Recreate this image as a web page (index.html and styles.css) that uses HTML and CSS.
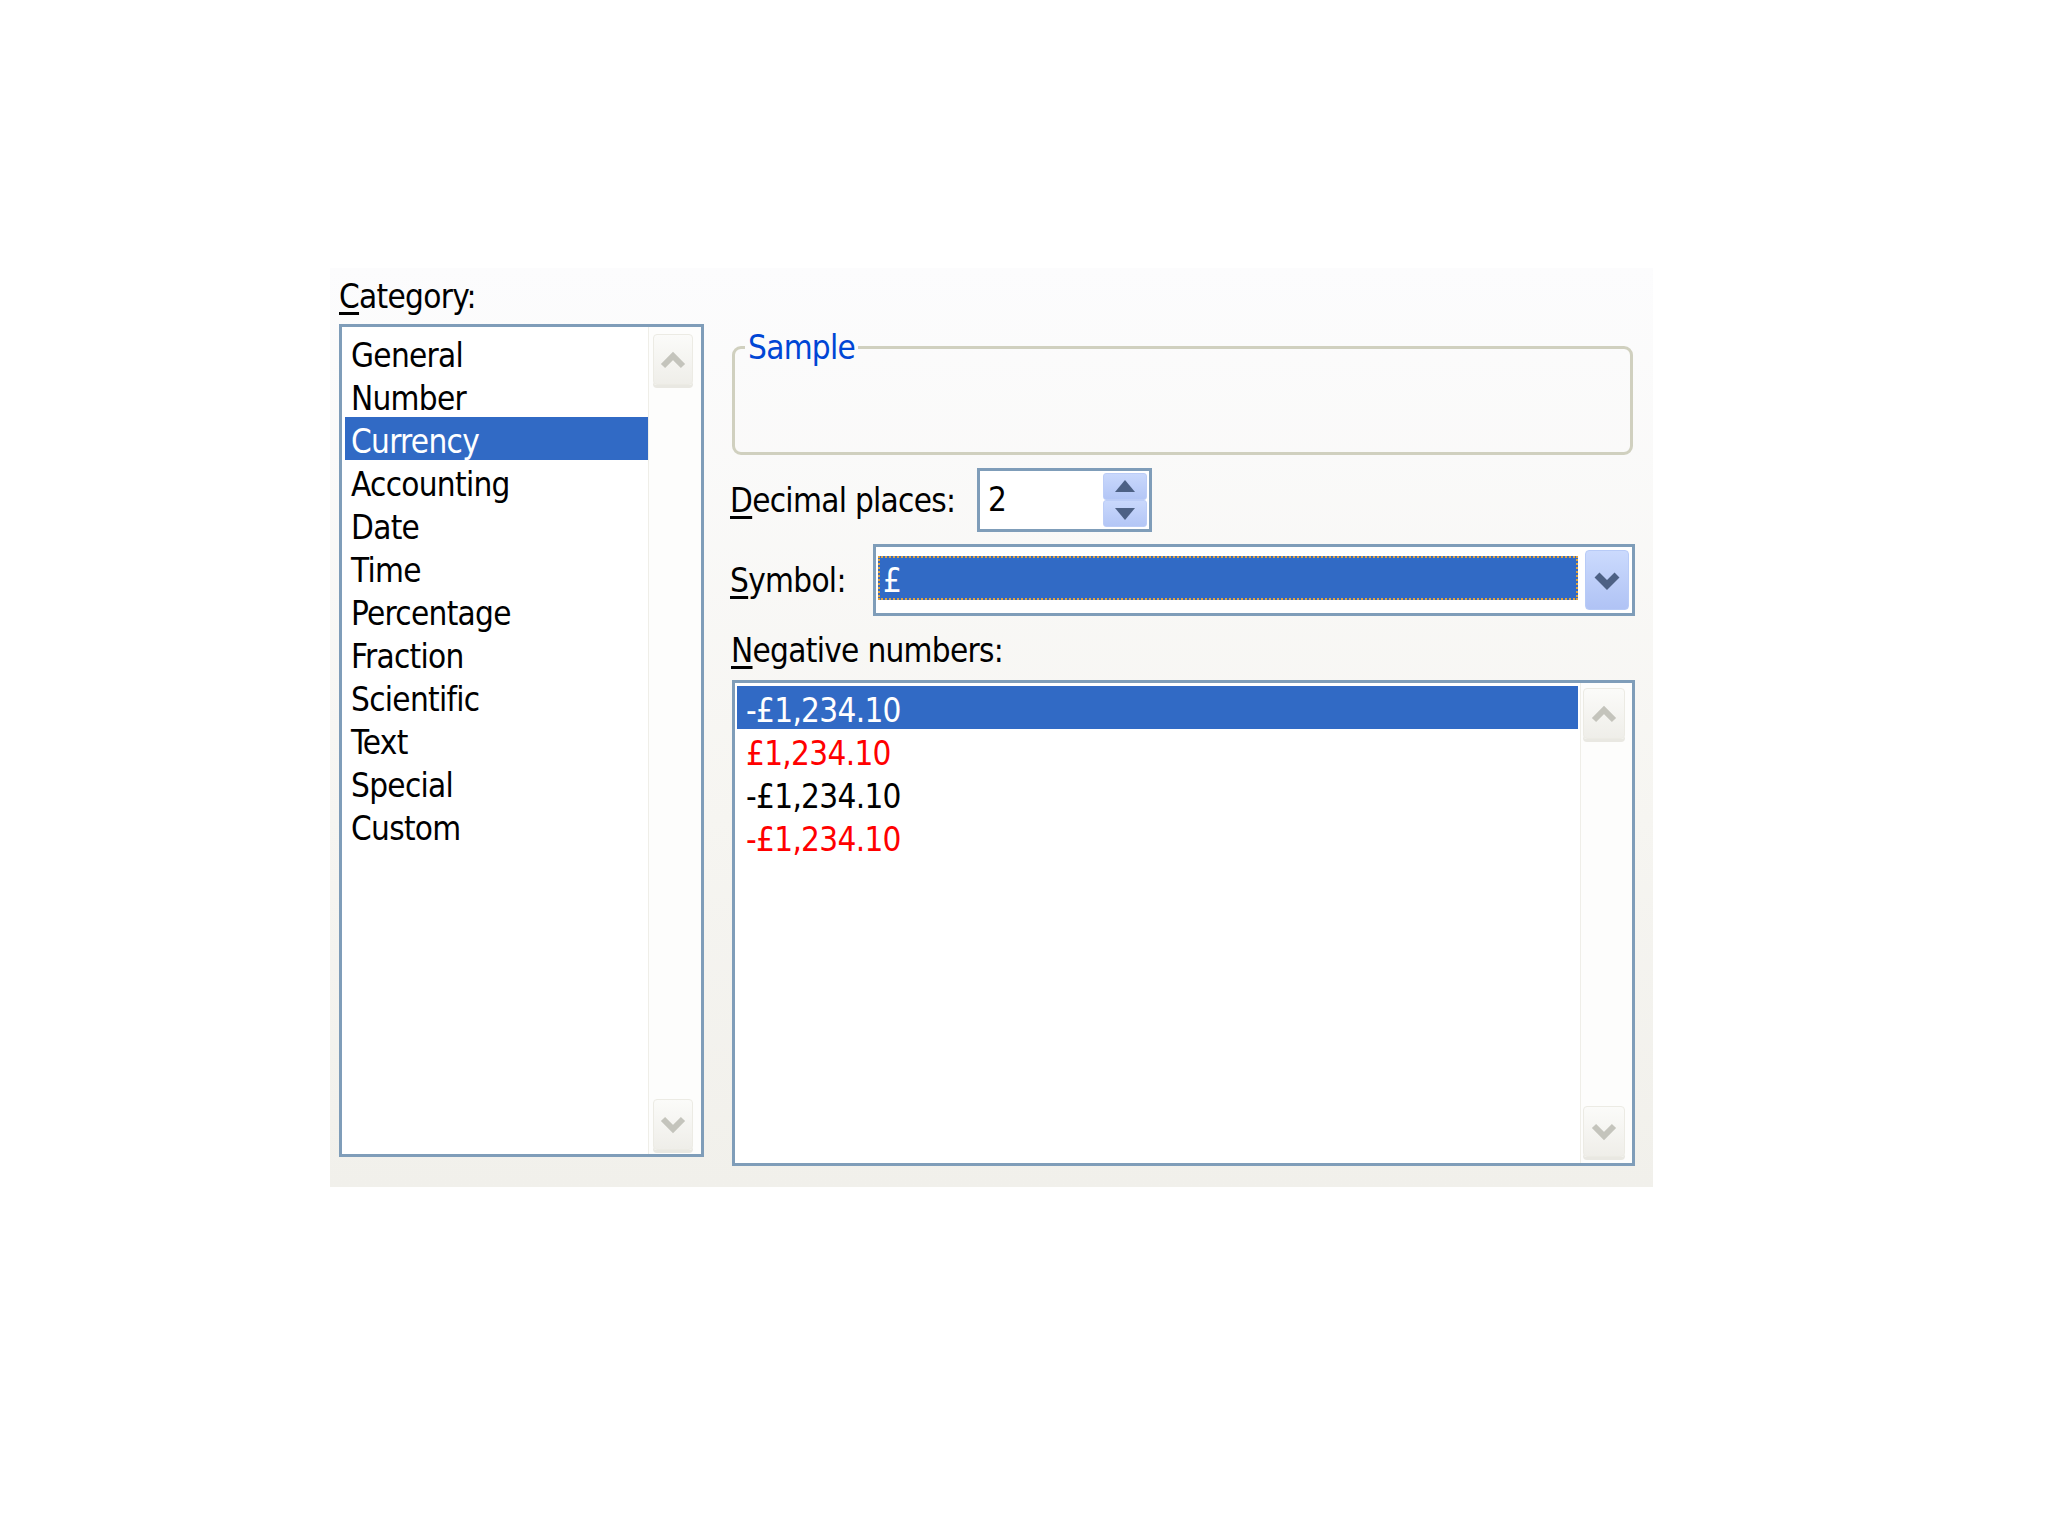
FILE: index.html
```html
<!DOCTYPE html>
<html lang="en">
<head>
<meta charset="utf-8">
<title>Format Cells - Number</title>
<link rel="stylesheet" href="styles.css">
</head>
<body>
<div class="panel">
  <div class="left">
    <div class="label cat-label"><u>C</u>ategory:</div>
    <div class="listbox cat">
      <ul class="items">
        <li>General</li>
        <li>Number</li>
        <li class="sel">Currency</li>
        <li>Accounting</li>
        <li>Date</li>
        <li>Time</li>
        <li>Percentage</li>
        <li>Fraction</li>
        <li>Scientific</li>
        <li>Text</li>
        <li>Special</li>
        <li>Custom</li>
      </ul>
      <div class="vscroll">
        <div class="sbtn sbtn-top"><svg width="28" height="18" viewBox="0 0 28 18"><polyline points="4,15 14,5 24,15" fill="none" stroke="#c4c4bc" stroke-width="6"/></svg></div>
        <div class="sbtn sbtn-bot"><svg width="28" height="18" viewBox="0 0 28 18"><polyline points="4,3 14,13 24,3" fill="none" stroke="#c4c4bc" stroke-width="6"/></svg></div>
      </div>
    </div>
  </div>
  <div class="right">
    <fieldset class="sample"><legend>Sample</legend></fieldset>
    <div class="row dec-row">
      <div class="label dec-label"><u>D</u>ecimal places:</div>
      <div class="spin">
        <span class="spin-val">2</span>
        <div class="spin-btns">
          <div class="spin-btn"><svg width="20" height="13" viewBox="0 0 20 13"><polygon points="10,0 20,12 0,12" fill="#4d6185"/></svg></div>
          <div class="spin-btn"><svg width="20" height="13" viewBox="0 0 20 13"><polygon points="0,1 20,1 10,13" fill="#4d6185"/></svg></div>
        </div>
      </div>
    </div>
    <div class="row sym-row">
      <div class="label sym-label"><u>S</u>ymbol:</div>
      <div class="combo">
        <div class="combo-sel">£</div>
        <div class="combo-btn"><svg width="28" height="20" viewBox="0 0 28 20"><polyline points="4,5 14,15 24,5" fill="none" stroke="#4d6185" stroke-width="7"/></svg></div>
      </div>
    </div>
    <div class="label neg-label"><u>N</u>egative numbers:</div>
    <div class="listbox neg">
      <ul class="items">
        <li class="sel">-£1,234.10</li>
        <li class="red">£1,234.10</li>
        <li>-£1,234.10</li>
        <li class="red">-£1,234.10</li>
      </ul>
      <div class="vscroll">
        <div class="sbtn sbtn-top"><svg width="28" height="18" viewBox="0 0 28 18"><polyline points="4,15 14,5 24,15" fill="none" stroke="#c4c4bc" stroke-width="6"/></svg></div>
        <div class="sbtn sbtn-bot"><svg width="28" height="18" viewBox="0 0 28 18"><polyline points="4,3 14,13 24,3" fill="none" stroke="#c4c4bc" stroke-width="6"/></svg></div>
      </div>
    </div>
  </div>
</div>
</body>
</html>
```
FILE: styles.css
```css
html, body {
  margin: 0;
  padding: 0;
  background: #ffffff;
}
body {
  font-family: "DejaVu Sans Condensed", "DejaVu Sans", "Liberation Sans", sans-serif;
  font-stretch: condensed;
  font-size: 33px;
  line-height: 33px;
  letter-spacing: -0.7px;
  color: #000000;
}
u {
  text-decoration: underline;
  text-decoration-thickness: 3px;
  text-underline-offset: 4px;
}
.panel {
  margin: 268px 0 0 330px;
  width: 1323px;
  height: 919px;
  background: linear-gradient(#fcfcfd, #f6f5f1 60%, #f1f0eb);
  display: flex;
}
.left {
  width: 365px;
  margin-left: 9px;
  padding-top: 12px;
  display: flex;
  flex-direction: column;
}
.label {
  height: 33px;
  white-space: nowrap;
}
.cat-label {
  margin-bottom: 11px;
}
.listbox {
  box-sizing: border-box;
  border: 3px solid #7f9db9;
  background: #ffffff;
  display: flex;
}
.cat {
  width: 365px;
  height: 833px;
}
.items {
  list-style: none;
  margin: 0;
  flex: 1;
}
.items li {
  box-sizing: border-box;
  height: 43px;
  padding-top: 8px;
  line-height: 33px;
  white-space: nowrap;
}
.items li.sel {
  background: #316ac5;
  color: #ffffff;
}
.items li.red {
  color: #ff0000;
}
.cat .items {
  padding: 4px 0 0 3px;
}
.cat .items li {
  padding-left: 6px;
}
.vscroll {
  box-sizing: border-box;
  border-left: 1px solid #efeee8;
  background: #fdfdfc;
  display: flex;
  flex-direction: column;
  justify-content: space-between;
}
.cat .vscroll {
  width: 53px;
  padding: 7px 0 4px 4px;
}
.sbtn {
  box-sizing: border-box;
  border: 1px solid #ecebe4;
  border-radius: 4px;
  background: linear-gradient(#fbfbf9, #efeee9);
  box-shadow: 0 3px 0 #e9e8e2;
  display: flex;
  align-items: center;
  justify-content: center;
}
.cat .sbtn {
  width: 40px;
  height: 51px;
}
.right {
  margin-left: 26px;
  width: 905px;
  padding-top: 63px;
  display: flex;
  flex-direction: column;
}
.sample {
  box-sizing: border-box;
  margin: 0 0 0 2px;
  width: 901px;
  height: 124px;
  min-width: 0;
  border: 3px solid #d0d0bf;
  border-radius: 9px;
  padding: 0 0 0 10px;
}
.sample legend {
  padding: 0 3px;
  color: #0046d5;
  line-height: 33px;
}
.row {
  display: flex;
  align-items: center;
}
.dec-row {
  margin-top: 13px;
}
.dec-label {
  width: 247px;
}
.spin {
  box-sizing: border-box;
  width: 175px;
  height: 64px;
  border: 3px solid #7f9db9;
  background: #ffffff;
  display: flex;
}
.spin-val {
  flex: 1;
  padding: 12px 0 0 8px;
  line-height: 33px;
}
.spin-btns {
  width: 44px;
  height: 54px;
  margin: 2px;
  display: flex;
  flex-direction: column;
}
.spin-btn {
  box-sizing: border-box;
  height: 27px;
  background: linear-gradient(#c9d8fc, #b3c6f6);
  border: 1px solid #bccdf7;
  border-radius: 3px;
  display: flex;
  align-items: center;
  justify-content: center;
}
.sym-row {
  margin-top: 12px;
}
.sym-label {
  width: 143px;
}
.combo {
  box-sizing: border-box;
  width: 762px;
  height: 72px;
  border: 3px solid #7f9db9;
  background: #ffffff;
  display: flex;
}
.combo-sel {
  box-sizing: border-box;
  flex: 1;
  height: 44px;
  margin: 9px 0 0 2px;
  padding: 6px 0 0 3px;
  background: #316ac5;
  border: 2px dotted #e0a33f;
  color: #ffffff;
  line-height: 33px;
}
.combo-btn {
  box-sizing: border-box;
  width: 44px;
  height: 60px;
  margin: 3px 3px 3px 7px;
  background: linear-gradient(#cbdafd, #b0c3f5);
  border: 1px solid #b8cbf7;
  border-radius: 4px;
  display: flex;
  align-items: center;
  justify-content: center;
}
.neg-label {
  margin-top: 18px;
  margin-bottom: 13px;
  padding-left: 1px;
}
.neg {
  margin-left: 2px;
  width: 903px;
  height: 486px;
}
.neg .items {
  padding: 3px 2px 0 2px;
}
.neg .items li {
  padding-left: 9px;
}
.neg .vscroll {
  width: 52px;
  padding: 5px 0 6px 2px;
}
.neg .sbtn {
  width: 42px;
  height: 51px;
}
```
